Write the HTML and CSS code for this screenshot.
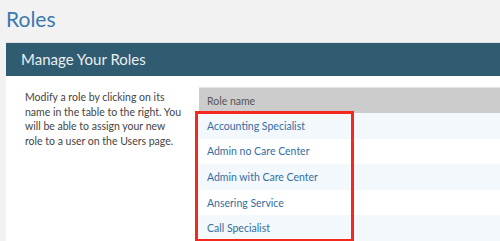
FILE: index.html
```html
<!DOCTYPE html>
<html lang="en">
<head>
    <meta charset="UTF-8">
    <meta name="viewport" content="width=device-width, initial-scale=1.0">
    <title>Roles</title>
    <link rel="stylesheet" href="styles.css">
</head>
<body>
    <h1 class="page-title">Roles</h1>
    <div class="panel">
        <div class="panel-heading">Manage Your Roles</div>
        <div class="panel-body">
            <p class="help-text">Modify a role by clicking on its<br>
                name in the table to the right. You<br>
                will be able to assign your new<br>
                role to a user on the Users page.</p>
            <div class="table-wrap">
                <table class="roles">
                    <thead>
                        <tr><th>Role name</th></tr>
                    </thead>
                    <tbody>
                        <tr><td><a href="#">Accounting Specialist</a></td></tr>
                        <tr><td><a href="#">Admin no Care Center</a></td></tr>
                        <tr><td><a href="#">Admin with Care Center</a></td></tr>
                        <tr><td><a href="#">Ansering Service</a></td></tr>
                        <tr><td><a href="#">Call Specialist</a></td></tr>
                    </tbody>
                </table>
                <div class="highlight"></div>
            </div>
        </div>
    </div>
</body>
</html>
```

FILE: styles.css
```css
body {
    margin: 0;
    background-color: #f2f2f2;
    font-family: "Lato", "Open Sans", sans-serif;
    overflow: hidden;
}
.page-title {
    margin: 0;
    padding: 6px 6px 0;
    height: 35px;
    box-sizing: border-box;
    font-size: 21px;
    font-weight: normal;
    color: #3a78b0;
}
.panel {
    margin: 7px 0 0 6px;
    background-color: #fff;
    border-top: 1px solid #e2e2e2;
}
.panel-heading {
    background-color: #305c71;
    color: #e9eef0;
    font-size: 15px;
    height: 33px;
    line-height: 33px;
    padding-left: 15px;
}
.panel-body {
    display: flex;
}
.help-text {
    width: 168px;
    flex-shrink: 0;
    margin: 0 6px 0 0;
    padding: 14px 0 0 19px;
    font-size: 10.5px;
    line-height: 14.5px;
    white-space: nowrap;
    color: #444;
}
.table-wrap {
    position: relative;
    flex: 1;
    margin-top: 11px;
}
.roles {
    width: 100%;
    border-collapse: collapse;
    font-size: 10.5px;
}
.roles th {
    background-color: #cccccc;
    border-top: 1px solid #e4e4e4;
    height: 25px;
    padding: 0 8px;
    text-align: left;
    font-weight: normal;
    color: #555;
}
.roles td {
    height: 25.6px;
    padding: 0 8px;
}
.roles tbody tr:nth-child(odd) {
    background-color: #f3f8fc;
}
.roles a {
    color: #336ea3;
    text-decoration: none;
}
.highlight {
    position: absolute;
    left: -4px;
    top: 24px;
    width: 153px;
    height: 125px;
    border: 3px solid #f5281e;
}
```
